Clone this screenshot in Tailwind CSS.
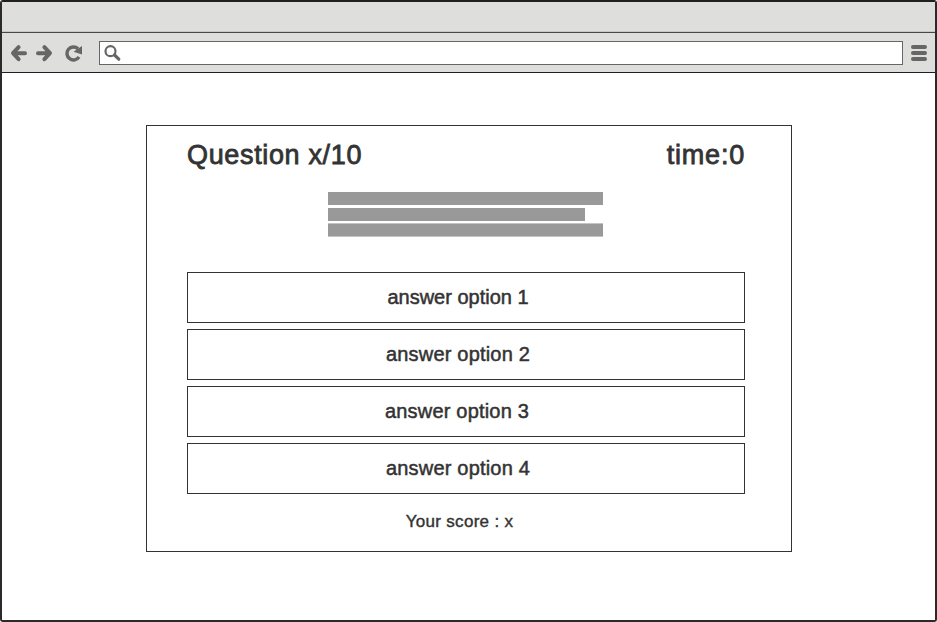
<!DOCTYPE html>
<html lang="en">
<head>
<meta charset="utf-8">
<title>Quiz</title>
<script src="https://cdn.jsdelivr.net/npm/@tailwindcss/browser@4"></script>
</head>
<body class="bg-white font-['Liberation_Sans',Arial,sans-serif] text-[#333]">
<div class="w-[937px] h-[622px] flex flex-col border-2 border-[#2b292a] border-t-[#231f20] rounded-[3px] overflow-hidden">
  <div class="h-[31px] shrink-0 bg-[#dededd] border-b border-[#484848] shadow-[inset_0_-1px_0_#c6c6c5]"></div>
  <header class="h-10 shrink-0 bg-[#dededd] border-b border-[#231f20] flex items-start">
    <svg class="w-[97px] h-10 shrink-0" viewBox="2 33 97 40" fill="none" stroke="#666" stroke-width="4" stroke-linecap="round" stroke-linejoin="round">
      <path d="M25 53.200H14.500M18.600 47.200L13 53.200L18.600 59.200"/>
      <path d="M38 53.200H48.500M44.400 47.200L50 53.200L44.400 59.200"/>
      <path d="M79 56.800A6.500 6.500 0 1 1 78 48.800" stroke-width="3.400" stroke-linecap="butt"/>
      <path d="M82 46V54.500L73.500 51.700Z" fill="#666" stroke="none"/>
    </svg>
    <div class="mt-2 w-[804px] h-6 border border-[#666] bg-white">
      <svg class="w-6 h-[22px]" viewBox="100 42 24 22" fill="none" stroke="#666">
        <circle cx="110.500" cy="51.200" r="5" stroke-width="2.200"/>
        <path d="M114.500 55L118.800 59.200" stroke-width="3.200" stroke-linecap="round"/>
      </svg>
    </div>
    <div class="ml-2 mt-3 w-4 flex flex-col gap-[2px]">
      <div class="h-1 rounded-full bg-[#666]"></div>
      <div class="h-1 rounded-full bg-[#666]"></div>
      <div class="h-1 rounded-full bg-[#666]"></div>
    </div>
  </header>
  <main class="flex-1 bg-white pt-[52px] pl-36">
    <section class="w-[646px] h-[427px] border border-[#333] pl-10 pr-[46px] flex flex-col">
      <div class="h-[66px] pt-[13px] flex justify-between text-[27px] leading-[32px] whitespace-nowrap [-webkit-text-stroke:0.8px_#333]">
        <h1 class="tracking-[0.65px]">Question x/10</h1>
        <div class="tracking-[0.8px]">time:0</div>
      </div>
      <div class="h-20 pl-[141px]">
        <div class="w-[275px] h-[13px] bg-[#999]"></div>
        <div class="mt-[3px] w-[257px] h-[13px] bg-[#999]"></div>
        <div class="mt-[2px] w-[275px] h-[14px] bg-[#999] border-y border-[#c4c4c4]"></div>
      </div>
      <div class="flex flex-col gap-[6px] text-[20px] leading-[49px] text-center whitespace-nowrap [-webkit-text-stroke:0.5px_#333]">
        <div class="h-[51px] border border-[#333] pr-4">answer option 1</div>
        <div class="h-[51px] border border-[#333] pr-4 tracking-[0.2px]">answer option 2</div>
        <div class="h-[51px] border border-[#333] pr-[18px] tracking-[0.2px]">answer option 3</div>
        <div class="h-[51px] border border-[#333] pr-4 tracking-[0.2px]">answer option 4</div>
      </div>
      <p class="mt-[17px] pr-[13px] text-center text-[17px] leading-[22px] tracking-[0.3px] [-webkit-text-stroke:0.4px_#333]">Your score : x</p>
    </section>
  </main>
</div>
</body>
</html>
